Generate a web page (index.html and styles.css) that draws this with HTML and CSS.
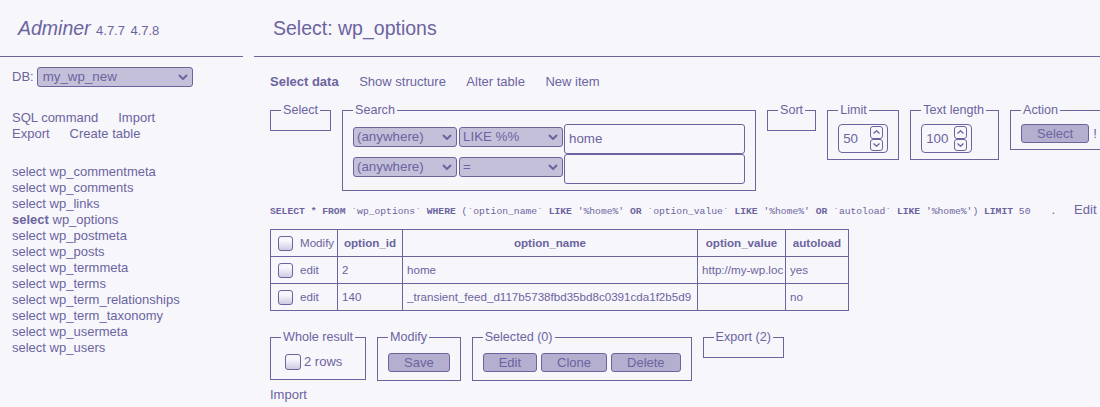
FILE: index.html
```html
<!DOCTYPE html>
<html lang="en">
<head>
<meta charset="utf-8">
<title>Select: wp_options - Adminer</title>
<link rel="stylesheet" href="styles.css">
</head>
<body>
<div class="layout">
  <aside class="menu">
    <h1 class="logo"><a class="brand" href="#">Adminer</a> <span class="version">4.7.7</span> <a class="version" href="#">4.7.8</a></h1>
    <div class="db-row">
      <span>DB:</span>
      <span class="select db-select"><span>my_wp_new</span><svg class="chev" viewBox="0 0 10 6"><path d="M1 1L5 5L9 1"/></svg></span>
    </div>
    <div class="links">
      <div class="link-line"><a href="#">SQL command</a><a href="#">Import</a></div>
      <div class="link-line"><a href="#">Export</a><a href="#">Create table</a></div>
    </div>
    <ul class="tables">
      <li><a href="#">select</a> <a href="#">wp_commentmeta</a></li>
      <li><a href="#">select</a> <a href="#">wp_comments</a></li>
      <li><a href="#">select</a> <a href="#">wp_links</a></li>
      <li><a href="#" class="active">select</a> <a href="#">wp_options</a></li>
      <li><a href="#">select</a> <a href="#">wp_postmeta</a></li>
      <li><a href="#">select</a> <a href="#">wp_posts</a></li>
      <li><a href="#">select</a> <a href="#">wp_termmeta</a></li>
      <li><a href="#">select</a> <a href="#">wp_terms</a></li>
      <li><a href="#">select</a> <a href="#">wp_term_relationships</a></li>
      <li><a href="#">select</a> <a href="#">wp_term_taxonomy</a></li>
      <li><a href="#">select</a> <a href="#">wp_usermeta</a></li>
      <li><a href="#">select</a> <a href="#">wp_users</a></li>
    </ul>
  </aside>

  <main class="content">
    <h2 class="title">Select: wp_options</h2>
    <div class="inner">
      <p class="tabs"><a href="#" class="current">Select data</a><a href="#">Show structure</a><a href="#">Alter table</a><a href="#">New item</a></p>

      <div class="filters">
        <fieldset><legend>Select</legend></fieldset>
        <fieldset>
          <legend>Search</legend>
          <div class="search-row">
            <span class="select s-col"><span>(anywhere)</span><svg class="chev" viewBox="0 0 10 6"><path d="M1 1L5 5L9 1"/></svg></span>
            <span class="select s-op"><span>LIKE %%</span><svg class="chev" viewBox="0 0 10 6"><path d="M1 1L5 5L9 1"/></svg></span>
            <span class="text-input">home</span>
          </div>
          <div class="search-row">
            <span class="select s-col"><span>(anywhere)</span><svg class="chev" viewBox="0 0 10 6"><path d="M1 1L5 5L9 1"/></svg></span>
            <span class="select s-op"><span>=</span><svg class="chev" viewBox="0 0 10 6"><path d="M1 1L5 5L9 1"/></svg></span>
            <span class="text-input"></span>
          </div>
        </fieldset>
        <fieldset><legend>Sort</legend></fieldset>
        <fieldset>
          <legend>Limit</legend>
          <span class="num"><span>50</span>
            <span class="spin"><span><svg viewBox="0 0 7 4"><path d="M0.5 3.5L3.5 0.8L6.5 3.5"/></svg></span><span><svg viewBox="0 0 7 4"><path d="M0.5 0.5L3.5 3.2L6.5 0.5"/></svg></span></span>
          </span>
        </fieldset>
        <fieldset class="fs-textlen">
          <legend>Text length</legend>
          <span class="num num-wide"><span>100</span>
            <span class="spin"><span><svg viewBox="0 0 7 4"><path d="M0.5 3.5L3.5 0.8L6.5 3.5"/></svg></span><span><svg viewBox="0 0 7 4"><path d="M0.5 0.5L3.5 3.2L6.5 0.5"/></svg></span></span>
          </span>
        </fieldset>
        <fieldset>
          <legend>Action</legend>
          <div class="action-row"><span class="btn">Select</span><span class="warn">!</span></div>
        </fieldset>
      </div>

      <p class="query"><code><b>SELECT</b> <b>*</b> <b>FROM</b> `wp_options` <b>WHERE</b> (`option_name` <b>LIKE</b> '%home%' <b>OR</b> `option_value` <b>LIKE</b> '%home%' <b>OR</b> `autoload` <b>LIKE</b> '%home%') <b>LIMIT</b> 50</code><span class="time">.</span><a href="#" class="edit-link">Edit</a></p>

      <table class="data">
        <colgroup><col class="c1"><col class="c2"><col class="c3"><col class="c4"><col class="c5"></colgroup>
        <thead>
          <tr><td class="mod"><div class="mod-cell"><span class="cb"></span>Modify</div></td><th>option_id</th><th>option_name</th><th>option_value</th><th>autoload</th></tr>
        </thead>
        <tbody>
          <tr><td class="mod"><div class="mod-cell"><span class="cb"></span>edit</div></td><td>2</td><td>home</td><td>http://my-wp.loc</td><td>yes</td></tr>
          <tr><td class="mod"><div class="mod-cell"><span class="cb"></span>edit</div></td><td>140</td><td>_transient_feed_d117b5738fbd35bd8c0391cda1f2b5d9</td><td></td><td>no</td></tr>
        </tbody>
      </table>

      <div class="actions">
        <fieldset><legend>Whole result</legend><div class="check-label"><span class="cb cb-big"></span>2 rows</div></fieldset>
        <fieldset><legend>Modify</legend><div class="btn-row"><span class="btn">Save</span></div></fieldset>
        <fieldset><legend>Selected (0)</legend><div class="btn-row"><span class="btn">Edit</span><span class="btn">Clone</span><span class="btn">Delete</span></div></fieldset>
        <fieldset><legend>Export (2)</legend></fieldset>
      </div>

      <p class="import"><a href="#">Import</a></p>
    </div>
  </main>
</div>
</body>
</html>
```

FILE: styles.css
```css
:root {
  --fg: #6b649f;
  --bg: #f7f6fb;
  --mid: #c4c0da;
  --btn: #b4afcf;
}

* { box-sizing: border-box; }

html, body {
  margin: 0;
  padding: 0;
  overflow: hidden;
}

body {
  width: 1100px;
  height: 407px;
  background: var(--bg);
  color: var(--fg);
  font: 13px/16px "Liberation Sans", Arial, sans-serif;
}

a { color: inherit; text-decoration: none; }

.layout {
  display: flex;
  align-items: flex-start;
}

/* ---------- sidebar ---------- */
.menu {
  width: 243px;
  flex-shrink: 0;
}

.logo, .title {
  margin: 0;
  height: 57px;
  padding: 16px 0 0 18px;
  border-bottom: 1px solid var(--fg);
  font-weight: normal;
  font-size: 19.5px;
  line-height: 24px;
  white-space: nowrap;
}

.brand { font-style: italic; }

.version {
  font-size: 13px;
  line-height: 16px;
}

.db-row {
  display: flex;
  align-items: center;
  gap: 3px;
  margin-top: 10px;
  padding-left: 12px;
  height: 20px;
}

.select {
  display: inline-flex;
  align-items: center;
  justify-content: space-between;
  height: 20px;
  border: 1px solid var(--fg);
  border-radius: 3px;
  background: var(--mid);
  font-size: 13.33px;
  padding: 0 4px 0 3px;
  white-space: nowrap;
}

.db-select {
  width: 156px;
  padding-left: 5px;
}

.chev {
  width: 10px;
  height: 6px;
  fill: none;
  stroke: var(--fg);
  stroke-width: 2;
  flex-shrink: 0;
}

.links {
  margin-top: 23px;
  padding-left: 12px;
}

.link-line {
  display: flex;
  gap: 20px;
}

.tables {
  list-style: none;
  margin: 22px 0 0;
  padding: 0 0 0 12px;
}

.tables li { line-height: 16px; }

.active { font-weight: bold; }

/* ---------- content ---------- */
.content {
  flex: 1;
  min-width: 0;
  margin-left: 11px;
}

.title { padding-left: 19px; }

.inner { padding-left: 16px; }

.tabs {
  display: flex;
  gap: 20.5px;
  margin: 17px 0 0;
}

.current { font-weight: bold; }

.filters, .actions {
  display: flex;
  align-items: flex-start;
  gap: 11px;
}

.filters { margin-top: 13px; }

fieldset {
  margin: 0;
  padding: 7px 10px 6px;
  border: 1px solid var(--fg);
  min-width: 0;
  flex-shrink: 0;
}

.fs-textlen { padding-right: 12px; }

legend {
  padding: 0 2px;
  font-size: 12.6px;
  line-height: 14px;
  white-space: nowrap;
}

.search-row {
  display: flex;
  align-items: flex-start;
}

.search-row .select {
  width: 104px;
  margin-top: 3px;
}

.s-col { margin-right: 2px; }
.s-op { margin-right: 1px; }

.text-input {
  display: flex;
  align-items: center;
  width: 181px;
  height: 30px;
  border: 1px solid var(--fg);
  border-radius: 3px;
  background: var(--bg);
  padding-left: 4px;
  font-size: 13.33px;
}

.num {
  display: flex;
  align-items: center;
  width: 50px;
  height: 29px;
  border: 1px solid var(--fg);
  border-radius: 4px;
  padding: 0 4px;
  font-size: 13.33px;
}

.num-wide { width: 51px; }

.spin {
  margin-left: auto;
  display: flex;
  flex-direction: column;
}

.spin > span {
  display: flex;
  align-items: center;
  justify-content: center;
  width: 13px;
  height: 12.5px;
  border: 1px solid var(--fg);
  border-radius: 3px;
}

.spin svg {
  width: 7px;
  height: 4px;
  fill: none;
  stroke: var(--fg);
  stroke-width: 1.3;
}

.action-row, .btn-row {
  display: flex;
  align-items: center;
  gap: 4px;
}

.btn {
  display: inline-flex;
  align-items: center;
  height: 19px;
  padding: 0 15px;
  border: 1px solid var(--fg);
  border-radius: 3px;
  background: var(--btn);
  font-size: 13px;
  white-space: nowrap;
}

.query {
  margin: 11px 0 0;
  white-space: nowrap;
  line-height: 16px;
}

.query code {
  font-family: "Liberation Mono", "DejaVu Sans Mono", monospace;
  font-size: 9.68px;
}

.time { margin-left: 21px; }

.edit-link { margin-left: 19px; }

.data {
  margin-top: 9px;
  border-collapse: collapse;
  table-layout: fixed;
  width: 578px;
}

.c1 { width: 67px; }
.c2 { width: 65px; }
.c3 { width: 295px; }
.c4 { width: 88px; }
.c5 { width: 63px; }

.data th, .data td {
  height: 27px;
  border: 1px solid var(--fg);
  padding: 0 4px;
  line-height: 16px;
  font-size: 11.6px;
  text-align: left;
  vertical-align: middle;
  white-space: nowrap;
  overflow: hidden;
}

.data th {
  font-weight: bold;
  text-align: center;
}

.data td.mod { padding-left: 7px; }

.mod-cell {
  display: flex;
  align-items: center;
  height: 16px;
}

.cb {
  display: block;
  width: 15px;
  height: 15px;
  border: 1px solid var(--fg);
  border-radius: 3px;
  background: linear-gradient(to bottom, var(--bg) 30%, #cfcbe2 100%);
  margin-right: 7px;
  flex-shrink: 0;
}

.actions { margin-top: 19px; }

.check-label {
  display: flex;
  align-items: center;
}

.cb-big {
  width: 16px;
  height: 16px;
  margin: 3px 3px 3px 4px;
}

.btn-row .btn { margin: 2px 0; }

.import { margin: 6px 0 0; }
```
